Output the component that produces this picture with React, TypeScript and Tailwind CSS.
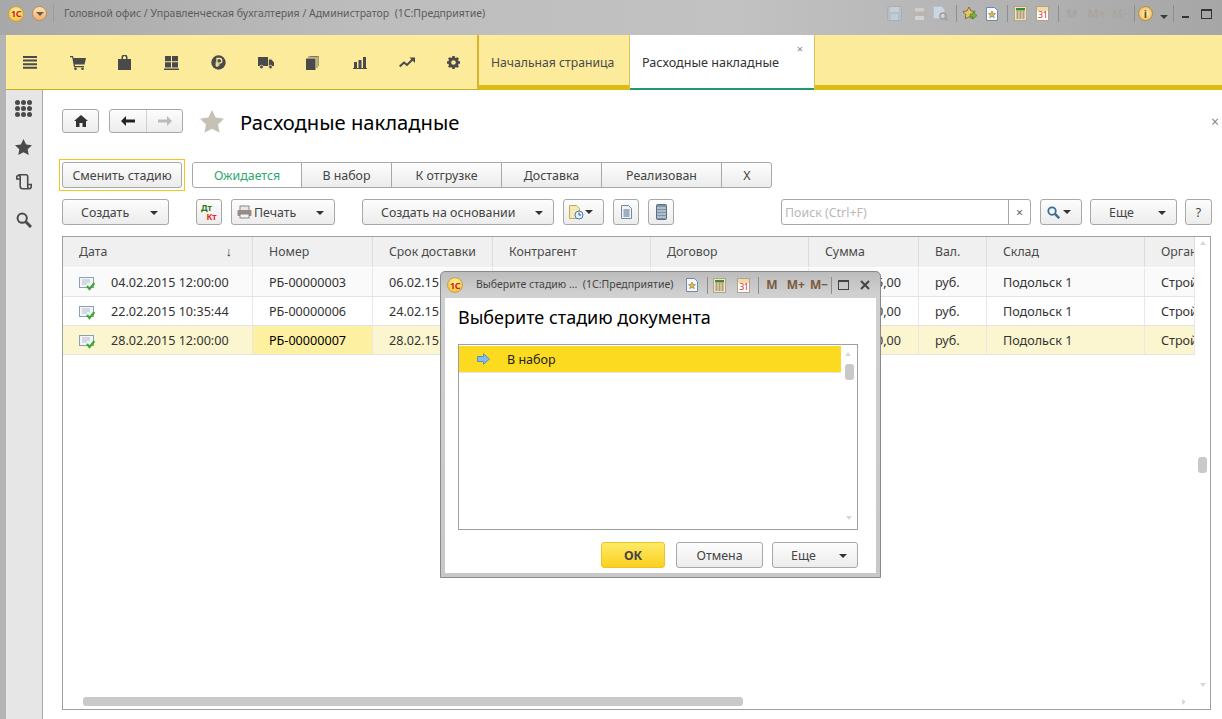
import React from "react";

const F = "[font-family:'Liberation_Sans',Arial,sans-serif]";
const Serif = "[font-family:'Liberation_Serif',serif]";

function Logo({ size = 16 }: { size?: number }) {
  return (
    <span
      className="flex shrink-0 items-center justify-center rounded-full border border-[#c9a24a] bg-[radial-gradient(circle_at_50%_35%,#fff6b0,#f8c940_70%,#e8a52c)] text-[9px] font-bold leading-none tracking-[-0.5px] text-[#d0201c]"
      style={{ width: size, height: size }}
    >
      1С
    </span>
  );
}

const Sep = () => <span className="block h-[17px] w-px shrink-0 bg-[#8e8e8e]" />;

function Calc() {
  return (
    <svg className="shrink-0" width="13" height="15" viewBox="0 0 13 15">
      <rect x=".5" y=".5" width="12" height="14" fill="#f4e3c0" stroke="#b0a48c" />
      <rect x="2" y="2" width="9" height="2.5" fill="#3e8a35" />
      <path d="M2.500 6h2M5.500 6h2M8.500 6h2M2.500 8h2M5.500 8h2M8.500 8h2M2.500 10h2M5.500 10h2M8.500 10h2M2.500 12h2M5.500 12h2M8.500 12h2" stroke="#6a5a3a" strokeWidth="1" />
    </svg>
  );
}

function Cal() {
  return (
    <span className="relative flex h-[15px] w-[13px] shrink-0 items-end justify-center border border-[#b0a48c] bg-white">
      <span className="absolute left-0 right-0 top-0 h-[4px] bg-[#f2d9a8]" />
      <span className="text-[9px] leading-[10px] tracking-[-0.5px] text-[#e0301e]">31</span>
    </span>
  );
}

function FavDoc() {
  return (
    <svg className="shrink-0" width="12" height="14" viewBox="0 0 12 14">
      <path d="M.5.5h8l3 3v10H.5z" fill="#f4f8fc" stroke="#6d8aa8" />
      <path d="M6 4l1.100 2.300 2.400.3-1.800 1.600.5 2.400L6 9.400l-2.200 1.200.5-2.400L2.500 6.600l2.400-.3z" fill="#e0b850" stroke="#8a7a50" strokeWidth=".6" />
    </svg>
  );
}

function TitleBar() {
  return (
    <div className="flex h-[35px] shrink-0 items-center bg-[linear-gradient(90deg,#a8a8a8,#bdbdbd_30%,#c2c2c2_60%,#a6a6a6)] pb-[8px] pl-[8px] pr-[10px]">
      <Logo />
      <span className="ml-[8px] flex h-[15px] w-[15px] shrink-0 items-center justify-center rounded-full border border-[#c08a50] bg-[linear-gradient(#fbe3b8,#eeb070)]">
        <span className="h-0 w-0 border-x-[4px] border-t-[4px] border-x-transparent border-t-[#6a5a48]" />
      </span>
      <span className="ml-[6px] mr-[10px] h-[17px] w-px bg-[#9a9a9a]" />
      <span className="whitespace-nowrap text-[10.5px] text-[#5c5c5c]">Головной офис / Управленческая бухгалтерия / Администратор&nbsp; (1С:Предприятие)</span>
      <span className="flex-1" />
      <div className="flex items-center">
        <svg className="shrink-0" width="15" height="15" viewBox="0 0 15 15"><rect x=".5" y=".5" width="14" height="14" rx="1" fill="#b4c0c8" stroke="#a2b0ba" /><rect x="3" y="1" width="9" height="5" fill="#c8ced2" /><rect x="4" y="8" width="7" height="6" fill="#c4ccd2" /></svg>
        <svg className="ml-[10px] shrink-0" width="15" height="14" viewBox="0 0 15 14"><rect x="3" y="1" width="9" height="4" fill="#d0cccc" /><rect x=".5" y="4.500" width="14" height="6" rx="1" fill="#bcb4b0" /><rect x="3" y="9" width="9" height="4" fill="#d6d2d0" /></svg>
        <svg className="ml-[6px] shrink-0" width="15" height="15" viewBox="0 0 15 15"><path d="M.5.5h8l3 3v9H.5z" fill="#cbd6e0" stroke="#b4c2ce" /><circle cx="10" cy="10" r="3" fill="none" stroke="#a89c98" strokeWidth="1.400" /><path d="M12 12l2.500 2.500" stroke="#a89c98" strokeWidth="1.600" /></svg>
        <span className="ml-[8px]"><Sep /></span>
        <svg className="ml-[5px] shrink-0" width="16" height="15" viewBox="0 0 16 15"><path d="M7 1l1.900 3.900 4.300.6-3.100 3 .7 4.300L7 10.800l-3.800 2 .7-4.300-3.100-3 4.300-.6z" fill="#ecc660" stroke="#6a5a30" strokeWidth=".8" /><path d="M8 8h3V6l4 3.500-4 3.500v-2H8z" fill="#72b43e" stroke="#3e7a22" strokeWidth=".6" /></svg>
        <span className="ml-[8px]"><FavDoc /></span>
        <span className="ml-[9px]"><Sep /></span>
        <span className="ml-[6px]"><Calc /></span>
        <span className="ml-[9px]"><Cal /></span>
        <span className="ml-[9px]"><Sep /></span>
        <span className="ml-[7px] text-[12px] font-bold text-[#aaa59f]">M</span>
        <span className="ml-[10px] text-[12px] font-bold text-[#aaa59f]">M+</span>
        <span className="ml-[6px] text-[12px] font-bold text-[#aaa59f]">M−</span>
        <span className="ml-[4px]"><Sep /></span>
        <span className="ml-[3px] flex h-[15px] w-[15px] shrink-0 items-center justify-center rounded-full border border-[#b88a3a] bg-[radial-gradient(circle,#fff4b8,#eeb050)] text-[11px] font-bold leading-none text-[#6a4a1a]">i</span>
        <span className="ml-[7px] mt-[6px] h-0 w-0 border-x-[4px] border-t-[4px] border-x-transparent border-t-[#3c3c3c]" />
        <span className="ml-[5px]"><Sep /></span>
        <span className="ml-[8px] mt-[6px] h-[2px] w-[7px] bg-[#333]" />
        <span className="ml-[12px] h-[10px] w-[11px] border border-t-2 border-[#333]" />
      </div>
    </div>
  );
}

const I = "#4a4a4a";
const topIcons: React.ReactNode[] = [
  <svg width="14" height="14" viewBox="0 0 14 14" fill={I}><path d="M0 0h14v2H0zM0 3.600h14v2H0zM0 7.200h14v2H0zM0 10.800h14v2H0z" /></svg>,
  <svg width="16" height="14" viewBox="0 0 16 14" fill={I}><path d="M0 0h3l.5 2H16l-1.500 6.500H4.800l.3 1.500H14v1.200H4L2.200 1.200H0z" /><circle cx="5.500" cy="12.800" r="1.300" /><circle cx="12.500" cy="12.800" r="1.300" /></svg>,
  <svg width="13" height="15" viewBox="0 0 13 15" fill={I}><path d="M0 4h3.500V2.500a3 3 0 016 0V4H13v11H0zM5 4h3V2.500a1.500 1.500 0 00-3 0z" fillRule="evenodd" /></svg>,
  <svg width="15" height="14" viewBox="0 0 15 14" fill={I}><path d="M1 0h6v5.200H1zM8 0h6v5.200H8zM1 6.200h6v5.200H1zM8 6.200h6v5.200H8zM0 12.600h15V14H0z" /></svg>,
  <svg width="15" height="15" viewBox="0 0 15 15"><circle cx="7.500" cy="7.500" r="7.200" fill={I} /><path d="M6 12V3.500h2.500a2.200 2.200 0 010 4.600H4.500M4.500 10h4" fill="none" stroke="#fbeb9b" strokeWidth="1.300" /></svg>,
  <svg width="16" height="12" viewBox="0 0 16 12" fill={I}><path d="M0 0h10v9H0zM10.800 2.500h2.700L16 5.500V9h-5.200z" /><circle cx="3.500" cy="10" r="1.800" stroke="#fbeb9b" strokeWidth=".7" /><circle cx="12.500" cy="10" r="1.800" stroke="#fbeb9b" strokeWidth=".7" /></svg>,
  <svg width="13" height="14" viewBox="0 0 13 14" fill={I}><path d="M0 2.500h9.500V14H0z" /><path d="M2 1h9v11M3.800 .3h9V10" fill="none" stroke={I} strokeWidth=".7" /></svg>,
  <svg width="14" height="12" viewBox="0 0 14 12" fill={I}><path d="M1 5h3v6H1zM5.500 3h3v8h-3zM10 0h3v11h-3zM0 11h14v1H0z" /></svg>,
  <svg width="16" height="11" viewBox="0 0 16 11"><path d="M.7 9.500L5 5.500l3 2.500L14 2" fill="none" stroke={I} strokeWidth="2" /><path d="M10.500 .5H16V6z" fill={I} /></svg>,
  <svg width="15" height="15" viewBox="0 0 15 15"><path d="M7.500 1v13M1 7.500h13M2.900 2.900l9.200 9.200M12.100 2.900l-9.200 9.200" stroke={I} strokeWidth="2.600" /><circle cx="7.500" cy="7.500" r="5.200" fill={I} /><circle cx="7.500" cy="7.500" r="2.300" fill="#fbeb9b" /></svg>,
];
const iconW = [48, 47, 47, 47, 47, 47, 47, 47, 47, 47];

function Toolbar() {
  return (
    <div className="ml-[6px] flex h-[55px] shrink-0 items-stretch bg-[#fbeb9b]">
      <div className="flex w-[471px] items-center shadow-[inset_0_-1px_0_#c9ad19]">
        {topIcons.map((ic, i) => (
          <div key={i} className="flex h-full shrink-0 items-center justify-center" style={{ width: iconW[i] }}>
            {ic}
          </div>
        ))}
      </div>
      <div className="flex w-[152px] items-center border-l-2 border-[#d6b52c] pl-[12px] pt-[2px] text-[12.2px] text-[#4a4a4a] shadow-[inset_0_-5px_0_#dcbc10]">
        Начальная страница
      </div>
      <div className="relative flex w-[186px] items-center border-x border-[#d6c25a] bg-white pl-[12px] pt-[2px] text-[12.6px] text-[#333] shadow-[inset_0_-2px_0_#1f9a6a]">
        Расходные накладные
        <span className="absolute right-[11px] top-[8px] text-[11px] leading-none text-[#888]">×</span>
      </div>
      <div className="flex-1 shadow-[inset_0_-5px_0_#dcbc10]" />
    </div>
  );
}

function Sidebar() {
  return (
    <div className="flex w-[37px] shrink-0 flex-col items-center border-r border-[#a8a8a8] bg-[#e6e6e6] pr-[1px] pt-[10px]">
      <svg width="17" height="17" viewBox="0 0 17 17" fill="#4a4a4a">
        {[2.5, 8.5, 14.5].flatMap((y) => [2.5, 8.5, 14.5].map((x) => <circle key={`${x}-${y}`} cx={x} cy={y} r="2.500" />))}
      </svg>
      <svg className="mt-[22px]" width="17" height="16" viewBox="0 0 17 16" fill="#4a4a4a"><path d="M8.500 0l2.600 5.400 5.900.8-4.300 4.100 1 5.700-5.200-2.800-5.200 2.800 1-5.700L0 6.200l5.900-.8z" /></svg>
      <svg className="mt-[19px]" width="16" height="16" viewBox="0 0 16 16" fill="none" stroke="#4a4a4a" strokeWidth="1.600"><path d="M4.200 5V2.600a1.800 1.800 0 00-3.400 0V5h3.400M2.500 .8h7.700a1.500 1.500 0 011.500 1.500v10.200a2.200 2.200 0 002.200 2.200H6.500a2.300 2.300 0 01-2.300-2.200V5" /><path d="M11.700 10.500h3.500v2a2.200 2.200 0 01-1.300 2.200" /></svg>
      <svg className="mt-[22px]" width="16" height="16" viewBox="0 0 16 16" fill="none" stroke="#4a4a4a"><circle cx="6.200" cy="6.200" r="4.600" strokeWidth="2" /><path d="M9.800 9.800L15 15" strokeWidth="3" /></svg>
    </div>
  );
}

const btn = "flex h-[26px] items-center rounded-[3px] border border-[#a8a8a8] bg-[linear-gradient(#fdfdfd,#ececec)] pt-[2px] text-[12.4px] text-[#444]";
const Caret = ({ c = "ml-auto mr-[10px]" }: { c?: string }) => (
  <span className={`${c} h-0 w-0 border-x-[4px] border-t-[4px] border-x-transparent border-t-[#333]`} />
);

const tabs = [
  ["Ожидается", 108],
  ["В набор", 90],
  ["К отгрузке", 110],
  ["Доставка", 100],
  ["Реализован", 120],
  ["Х", 50],
] as const;

function Actions() {
  return (
    <div className="flex flex-col pl-[19px]">
      <div className="flex h-[24px] items-center">
        <div className={`${btn} !h-[24px] w-[37px] justify-center !pt-0`}>
          <svg width="14" height="12" viewBox="0 0 14 12" fill="#333"><path d="M7 0L0 6h2v6h3.500V8h3v4H12V6h2z" /></svg>
        </div>
        <div className={`${btn} !h-[24px] ml-[10px] w-[74px] !pt-0`}>
          <span className="flex h-full w-[37px] items-center justify-center border-r border-[#d0d0d0]">
            <svg width="14" height="10" viewBox="0 0 14 10" fill="#222"><path d="M0 5l5-5v3.500h9v3H5V10z" /></svg>
          </span>
          <span className="flex h-full flex-1 items-center justify-center">
            <svg width="14" height="10" viewBox="0 0 14 10" fill="#bbb"><path d="M14 5L9 0v3.500H0v3h9V10z" /></svg>
          </span>
        </div>
        <svg className="ml-[17px]" width="24" height="23" viewBox="0 0 24 23" fill="#c5c1b5"><path d="M12 0l3.700 7.600 8.300 1.100-6 5.800 1.500 8.300-7.500-4-7.500 4L6 14.500 0 8.700l8.300-1.100z" /></svg>
        <h1 className="ml-[16px] mt-[3px] text-[20.2px] font-normal leading-none text-black">Расходные накладные</h1>
        <span className="ml-auto mr-[3px] mt-[1px] text-[14px] leading-none text-[#888]">×</span>
      </div>

      <div className="mt-[26px] flex h-[32px] items-center">
        <div className="-ml-[3px] flex h-[32px] w-[126px] items-center justify-center border border-[#f5c518]">
          <div className={`${btn} w-[120px] justify-center`}>Сменить стадию</div>
        </div>
        <div className={`${btn} ml-[7px] w-[580px] !pt-0`}>
          {tabs.map(([t, w], i) => (
            <span
              key={t}
              className={`flex h-full shrink-0 items-center justify-center pt-[2px] ${i ? "border-l border-[#a8a8a8]" : "rounded-l-[3px] bg-white text-[#2ea86f]"}`}
              style={{ width: i === 5 ? 51 : w }}
            >
              {t}
            </span>
          ))}
        </div>
      </div>

      <div className="mt-[8px] flex h-[26px] items-center pr-[10px]">
        <div className={`${btn} w-[107px] pl-[18px]`}>Создать<Caret /></div>
        <div className={`${btn} ml-[27px] w-[26px] flex-col justify-center !pt-0 !text-[8.5px] font-bold leading-[9px]`}>
          <span className={`-ml-[5px] ${Serif} text-[#2f7a14]`}>Дт</span>
          <span className={`ml-[5px] ${Serif} text-[#e8261c]`}>Кт</span>
        </div>
        <div className={`${btn} ml-[9px] w-[104px] pl-[5px]`}>
          <svg className="-mt-[2px]" width="15" height="14" viewBox="0 0 15 14"><rect x="3" y="1" width="9" height="5" fill="#e8e8e8" stroke="#888" /><rect x=".5" y="5" width="14" height="6" rx="1" fill="#9c8a84" /><rect x="3" y="9" width="9" height="4" fill="#f4f4f4" stroke="#888" /></svg>
          <span className="ml-[2px]">Печать</span><Caret />
        </div>
        <div className={`${btn} ml-[27px] w-[192px] pl-[18px]`}>Создать на основании<Caret /></div>
        <div className={`${btn} ml-[9px] w-[41px] pl-[4px] !pt-0`}>
          <svg width="16" height="16" viewBox="0 0 16 16"><path d="M1.500 1.500h7l3 3v10h-10z" fill="#f6e9b8" stroke="#c4a95a" /><circle cx="11" cy="11" r="4" fill="#e8f0fa" stroke="#4a78b0" /><path d="M11 8.500v2.500h2" stroke="#2a5a98" fill="none" /></svg>
          <Caret c="ml-[1px]" />
        </div>
        <div className={`${btn} ml-[9px] w-[26px] justify-center !pt-0`}>
          <svg width="11" height="14" viewBox="0 0 11 14"><path d="M.5.500h7l3 3v10H.500z" fill="#eef4fa" stroke="#7088a0" /><path d="M2.500 5h6M2.500 7h6M2.500 9h6M2.500 11h6" stroke="#506880" /></svg>
        </div>
        <div className={`${btn} ml-[9px] w-[26px] justify-center !pt-0`}>
          <svg width="11" height="16" viewBox="0 0 11 16"><rect x=".5" y=".5" width="10" height="15" rx="1" fill="#7f93a8" stroke="#5a6e82" /><path d="M1 4h9M1 7h9M1 10h9M1 13h9" stroke="#dfe6ee" /></svg>
        </div>
        <div className={`${btn} ml-auto w-[250px] !bg-none !bg-white !pt-0`}>
          <span className="flex-1 pl-[3px] pt-[2px] text-[#b8b8b8]">Поиск (Ctrl+F)</span>
          <span className="flex h-full w-[22px] items-center justify-center border-l border-[#a8a8a8] pt-[2px] text-[#666]">×</span>
        </div>
        <div className={`${btn} ml-[9px] w-[42px] pl-[6px] !pt-0`}>
          <svg width="13" height="13" viewBox="0 0 16 16" fill="none" stroke="#3a6a9a"><circle cx="6.200" cy="6.200" r="4.600" strokeWidth="2.200" /><path d="M9.800 9.800L15 15" strokeWidth="3" /></svg>
          <Caret c="ml-[3px]" />
        </div>
        <div className={`${btn} ml-[8px] w-[87px] pl-[18px]`}>Еще<Caret /></div>
        <div className={`${btn} ml-[8px] w-[27px] justify-center`}>?</div>
      </div>
    </div>
  );
}

const cols = [190, 120, 120, 158, 158, 110, 68, 158, 50];
const headers = ["Дата", "Номер", "Срок доставки", "Контрагент", "Договор", "Сумма", "Вал.", "Склад", "Организация"];
const rows = [
  ["04.02.2015 12:00:00", "РБ-00000003", "06.02.15", "", "", "1 215,00", "руб.", "Подольск 1", "СтройМатериал"],
  ["22.02.2015 10:35:44", "РБ-00000006", "24.02.15", "", "", "3 450,00", "руб.", "Подольск 1", "СтройМатериал"],
  ["28.02.2015 12:00:00", "РБ-00000007", "28.02.15", "", "", "2 700,00", "руб.", "Подольск 1", "СтройМатериал"],
];

function DocIcon() {
  return (
    <svg className="mr-[16px] shrink-0" width="16" height="15" viewBox="0 0 16 15">
      <rect x=".5" y="1.500" width="14" height="10" fill="#f2f6fa" stroke="#8aa0b4" />
      <path d="M3 4h8M3 6h8M3 8h5" stroke="#b0bcc8" />
      <path d="M8 10l2.500 3L15.500 7" fill="none" stroke="#3fa82e" strokeWidth="2.200" />
    </svg>
  );
}

function Table() {
  return (
    <div className="relative mb-[9px] ml-[19px] mr-[11px] mt-[11px] flex-1 overflow-hidden border border-[#a0a0a0] bg-white text-[12.6px] text-[#333]">
      <div className="flex h-[30px] w-[1132px] overflow-hidden">
        {cols.map((w, i) => (
          <div key={i} className="relative flex h-full shrink-0 items-center overflow-hidden border-r border-[#dcdcdc] bg-[#f0f0f0] pl-[16px] text-[12.3px] text-[#4a4a4a]" style={{ width: w }}>
            <span className="whitespace-nowrap">{headers[i]}</span>
            {i === 0 && <span className="absolute right-[20px] text-[13px] text-[#333]">↓</span>}
          </div>
        ))}
      </div>
      {rows.map((r, ri) => (
        <div key={ri} className={`mt-px flex h-[28px] w-[1132px] overflow-hidden ${ri === 0 ? "bg-[#fafafa]" : ri === 2 ? "bg-[#fcf6d0]" : "bg-white"} shadow-[0_1px_0_#e4e4e4]`}>
          {r.map((c, i) => (
            <div
              key={i}
              className={`flex h-full shrink-0 items-center overflow-hidden whitespace-nowrap border-r border-[#e8e8e8] pt-[2px] ${i === 5 ? "justify-end pr-[17px]" : "pl-[16px]"} ${ri === 2 && i === 1 ? "bg-[#fdf0a0] text-black" : ""}`}
              style={{ width: cols[i] }}
            >
              {i === 0 && <DocIcon />}
              {c}
            </div>
          ))}
        </div>
      ))}
      <div className="absolute left-[20px] top-[460px] h-[9px] w-[660px] rounded-[3px] bg-[#c9c9c9]" />
      <div className="absolute right-[3px] top-[220px] h-[16px] w-[9px] rounded-[3px] bg-[#c9c9c9]" />
      <span className="absolute right-[4px] top-[4px] h-0 w-0 border-x-[3px] border-b-[4px] border-x-transparent border-b-[#d8d8d8]" />
      <span className="absolute bottom-[22px] right-[4px] h-0 w-0 border-x-[3px] border-t-[4px] border-x-transparent border-t-[#d8d8d8]" />
      <span className="absolute bottom-[4px] right-[24px] h-0 w-0 border-y-[3px] border-l-[4px] border-y-transparent border-l-[#d8d8d8]" />
    </div>
  );
}

function Dialog() {
  return (
    <div className="absolute left-[440px] top-[271px] flex h-[307px] w-[441px] flex-col rounded-t-[5px] border border-[#8a8a8a] bg-[linear-gradient(#bcbcbc,#d0d0d0_22px,#c8c8c8)] px-[4px] pb-[4px] text-[12.4px]">
      <div className="flex h-[26px] shrink-0 items-center pl-[2px]">
        <Logo />
        <span className="ml-[13px] whitespace-nowrap text-[10.5px] text-[#444]">Выберите стадию ...&nbsp; (1С:Предприятие)</span>
        <span className="ml-[13px]"><FavDoc /></span>
        <span className="ml-[9px]"><Sep /></span>
        <span className="ml-[5px]"><Calc /></span>
        <span className="ml-[11px]"><Cal /></span>
        <span className="ml-[8px]"><Sep /></span>
        <span className="ml-[7px] text-[12px] font-bold text-[#7c5a3c]">M</span>
        <span className="ml-[9px] text-[12px] font-bold text-[#7c5a3c]">M+</span>
        <span className="ml-[5px] text-[12px] font-bold text-[#7c5a3c]">M−</span>
        <span className="ml-[3px]"><Sep /></span>
        <span className="ml-[6px] h-[10px] w-[11px] shrink-0 border border-t-2 border-[#444]" />
        <svg className="ml-[11px] shrink-0" width="10" height="10" viewBox="0 0 10 10"><path d="M1 1l8 8M9 1l-8 8" stroke="#444" strokeWidth="2" /></svg>
      </div>
      <div className="flex flex-1 flex-col bg-white pl-[13px] pr-[18px]">
        <div className="mt-[8px] h-[22px] text-[18px] leading-[22px] text-black">Выберите стадию документа</div>
        <div className="relative mt-[16px] h-[186px] border border-[#a0a0a0] bg-white pt-[1px]">
          <div className="flex h-[26px] w-[382px] items-center bg-[#fcda1f] pl-[18px] text-[12.5px] text-[#222]">
            <svg width="13" height="12" viewBox="0 0 13 12"><path d="M.5 3.500h6V.8L12.500 6l-6 5.200V8.500h-6z" fill="#7fbdee" stroke="#5c92bc" /></svg>
            <span className="ml-[17px] pt-[2px]">В набор</span>
          </div>
          <div className="h-px w-[382px] bg-[#e4e4e4]" />
          <span className="absolute right-[6px] top-[7px] h-0 w-0 border-x-[3px] border-b-[4px] border-x-transparent border-b-[#d8d8d8]" />
          <span className="absolute right-[3px] top-[19px] h-[16px] w-[9px] rounded-[3px] bg-[#c9c9c9]" />
          <span className="absolute bottom-[9px] right-[5px] h-0 w-0 border-x-[3px] border-t-[4px] border-x-transparent border-t-[#d8d8d8]" />
        </div>
        <div className="mt-[12px] flex justify-end">
          <div className="flex h-[26px] w-[64px] items-center justify-center rounded-[3px] border border-[#eec22a] bg-[linear-gradient(#feea66,#fbd01f)] pt-[2px] font-bold text-[#444]">ОК</div>
          <div className={`${btn} ml-[11px] w-[87px] justify-center`}>Отмена</div>
          <div className={`${btn} ml-[9px] w-[86px] pl-[18px]`}>Еще<Caret /></div>
        </div>
      </div>
    </div>
  );
}

export default function App() {
  return (
    <div className={`relative flex h-[719px] w-[1222px] flex-col overflow-hidden bg-[#b4b4b4] ${F}`}>
      <TitleBar />
      <Toolbar />
      <div className="ml-[6px] flex min-h-0 flex-1">
        <Sidebar />
        <div className="flex min-w-0 flex-1 flex-col bg-white pt-[19px]">
          <Actions />
          <Table />
        </div>
      </div>
      <Dialog />
    </div>
  );
}
